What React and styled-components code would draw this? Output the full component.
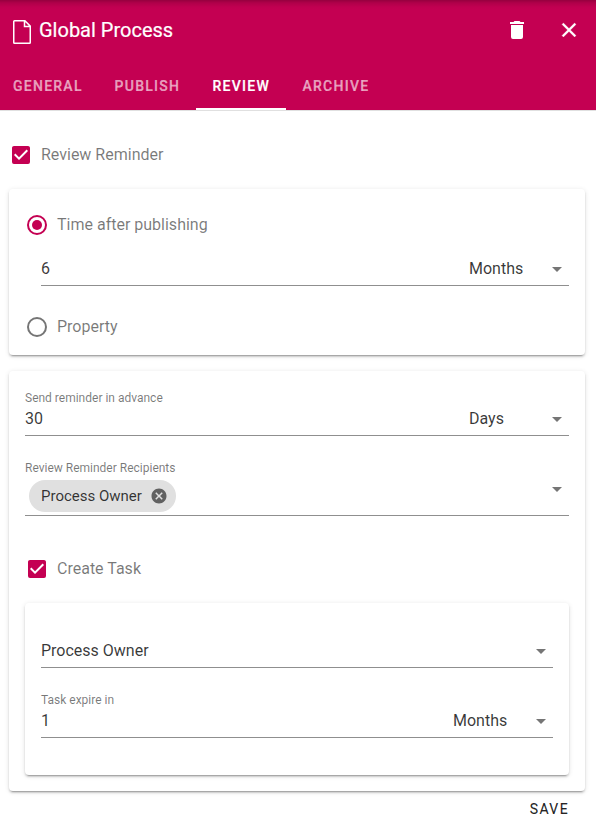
import React from "react";
import styled, { createGlobalStyle } from "styled-components";

const PINK = "#c40052";
const TEXT = "rgba(0, 0, 0, 0.78)";
const MUTED = "rgba(0, 0, 0, 0.53)";

const GlobalStyle = createGlobalStyle`
  *, *::before, *::after { box-sizing: border-box; }
  body { margin: 0; background: #fff; font-family: Roboto, "Liberation Sans", sans-serif; font-size: 16px; color: ${TEXT}; }
`;

const Dialog = styled.div`
  height: 830px;
  overflow: hidden;
  display: flex;
  flex-direction: column;
`;

const Header = styled.header`
  height: 111px;
  flex: none;
  display: flex;
  flex-direction: column;
  background: linear-gradient(rgba(0, 0, 0, 0.24), rgba(0, 0, 0, 0.1) 3px, rgba(0, 0, 0, 0.02) 7px, transparent 10px), ${PINK};
  border-bottom: 1px solid #e0e0e0;
  color: #fff;
`;

const TitleBar = styled.div`
  height: 62px;
  display: flex;
  align-items: center;
  padding: 0 15px 2px 13px;
`;

const Title = styled.h1`
  margin: 0 auto 0 8px;
  font-size: 20px;
  font-weight: 400;
  line-height: 24px;
  -webkit-text-stroke: 0.2px #fff;
`;

const IconButton = styled.button`
  width: 24px;
  height: 24px;
  padding: 0;
  margin-left: ${(p) => p.$gap || 0}px;
  border: 0;
  background: none;
  color: inherit;
  display: flex;
`;

const Icon = styled.svg`
  display: block;
  flex: none;
  width: ${(p) => p.$w || 24}px;
  height: ${(p) => p.$h || 24}px;
  fill: ${(p) => p.$color || "currentColor"};
  margin-top: ${(p) => p.$drop || 0}px;
`;

const Tabs = styled.nav`
  height: 48px;
  display: flex;
  padding-left: 13px;
`;

const Tab = styled.button`
  flex: none;
  width: ${(p) => p.$width}px;
  padding: 2px 0 0 ${(p) => p.$inset}px;
  border: 0;
  border-bottom: 2px solid ${(p) => (p.$active ? "#fff" : "transparent")};
  background: none;
  color: ${(p) => (p.$active ? "#fff" : "rgba(255, 255, 255, 0.6)")};
  font: 500 14px/44px Roboto, sans-serif;
  letter-spacing: 1.25px;
  text-align: left;
  text-transform: uppercase;
  -webkit-text-stroke: 0.2px currentColor;
`;

const Content = styled.main`
  display: flex;
  flex-direction: column;
  padding: 32px 11px 0 9px;
`;

const Choice = styled.label`
  display: flex;
  align-items: center;
  height: 24px;
  gap: 8px;
  line-height: 24px;
  color: ${MUTED};
  margin: ${(p) => p.$margin || 0};
`;

const ChoiceText = styled.span`
  height: 24px;
  line-height: 23px;
`;

const Card = styled.section`
  height: ${(p) => p.$height}px;
  margin-top: ${(p) => p.$top}px;
  padding: ${(p) => p.$pad};
  border-radius: 4px;
  background: #fff;
  box-shadow: 0 3px 1px -2px rgba(0, 0, 0, 0.2), 0 2px 2px 0 rgba(0, 0, 0, 0.14), 0 1px 5px 0 rgba(0, 0, 0, 0.12);
`;

const Field = styled.div`
  height: ${(p) => p.$height}px;
  margin: ${(p) => p.$margin || 0};
  border-bottom: 1px solid #8f8f8f;
  display: flex;
  flex-direction: column;
`;

const FieldLabel = styled.div`
  height: 16px;
  font-size: 12px;
  line-height: 16px;
  color: ${MUTED};
`;

const FieldRow = styled.div`
  flex: 1;
  display: flex;
  align-items: flex-start;
  line-height: 26px;
`;

const Value = styled.span`
  flex: 1;
`;

const Unit = styled.span`
  width: 76px;
`;

const Chip = styled.span`
  display: flex;
  align-items: center;
  height: 32px;
  width: 147px;
  margin: 4px auto 0 4px;
  padding: 0 8px 0 12px;
  justify-content: space-between;
  border-radius: 16px;
  background: #e0e0e0;
  font-size: 15px;
  line-height: 24px;
`;

const SaveButton = styled.button`
  align-self: flex-end;
  margin: 6px 16px 0 0;
  padding: 0;
  border: 0;
  background: none;
  color: rgba(0, 0, 0, 0.87);
  font: 400 14px/24px Roboto, sans-serif;
  letter-spacing: 1.4px;
  -webkit-text-stroke: 0.15px currentColor;
`;

const GREY = "rgba(0, 0, 0, 0.54)";

const FileIcon = () => (
  <Icon viewBox="0 0 18 24" $w={18} $drop={4}>
    <path
      d="M1.5 0.75H11.9L17.25 6.1V22.5Q17.25 23.25 16.5 23.25H1.5Q0.75 23.25 0.75 22.5V1.5Q0.75 0.75 1.5 0.75ZM11.5 0.75V6.6H17.25"
      fill="none"
      stroke="currentColor"
      strokeWidth="1.5"
    />
  </Icon>
);

const TrashIcon = () => (
  <Icon viewBox="0 0 24 24">
    <path d="M19,4H15.5L14.5,3H9.5L8.5,4H5V6H19M6,19A2,2 0 0,0 8,21H16A2,2 0 0,0 18,19V7H6V19Z" />
  </Icon>
);

const CloseIcon = () => (
  <Icon viewBox="0 0 24 24">
    <path d="M19,6.41L17.59,5L12,10.59L6.41,5L5,6.41L10.59,12L5,17.59L6.41,19L12,13.41L17.59,19L19,17.59L13.41,12L19,6.41Z" stroke="currentColor" strokeWidth="0.3" />
  </Icon>
);

const CheckedIcon = () => (
  <Icon viewBox="0 0 24 24" $color={PINK}>
    <path d="M10,17L5,12L6.41,10.58L10,14.17L17.59,6.58L19,8M19,3H5C3.89,3 3,3.89 3,5V19A2,2 0 0,0 5,21H19A2,2 0 0,0 21,19V5C21,3.89 20.1,3 19,3Z" />
  </Icon>
);

const RadioIcon = ({ checked }) => (
  <Icon viewBox="0 0 24 24" $color={checked ? PINK : "rgba(0, 0, 0, 0.54)"}>
    <path d="M12,20A8,8 0 0,1 4,12A8,8 0 0,1 12,4A8,8 0 0,1 20,12A8,8 0 0,1 12,20M12,2A10,10 0 0,0 2,12A10,10 0 0,0 12,22A10,10 0 0,0 22,12A10,10 0 0,0 12,2Z" />
    {checked && <circle cx="12" cy="12" r="5" />}
  </Icon>
);

const Caret = ({ drop = 0 }) => (
  <Icon viewBox="0 0 24 24" $color={GREY} $drop={drop}>
    <path d="M7,10L12,15L17,10H7Z" />
  </Icon>
);

const ChipClose = () => (
  <Icon viewBox="0 0 24 24" $w={18} $h={18} $color="#616161">
    <path d="M12,2C17.53,2 22,6.47 22,12C22,17.53 17.53,22 12,22C6.47,22 2,17.53 2,12C2,6.47 6.47,2 12,2M15.59,7L12,10.59L8.41,7L7,8.41L10.59,12L7,15.59L8.41,17L12,13.41L15.59,17L17,15.59L13.41,12L17,8.41L15.59,7Z" />
  </Icon>
);

const SelectField = ({ label, value, unit, height, margin }) => (
  <Field $height={height} $margin={margin}>
    {label && <FieldLabel>{label}</FieldLabel>}
    <FieldRow>
      <Value>{value}</Value>
      {unit && <Unit>{unit}</Unit>}
      <Caret drop={1} />
    </FieldRow>
  </Field>
);

export default function App() {
  return (
    <Dialog>
      <GlobalStyle />
      <Header>
        <TitleBar>
          <FileIcon />
          <Title>Global Process</Title>
          <IconButton aria-label="Delete"><TrashIcon /></IconButton>
          <IconButton aria-label="Close" $gap={28}><CloseIcon /></IconButton>
        </TitleBar>
        <Tabs>
          <Tab $width={86} $inset={0}>General</Tab>
          <Tab $width={97} $inset={15.6}>Publish</Tab>
          <Tab $width={90} $inset={16.5} $active>Review</Tab>
          <Tab $width={102} $inset={16.5}>Archive</Tab>
        </Tabs>
      </Header>
      <Content>
        <Choice><CheckedIcon /><ChoiceText>Review Reminder</ChoiceText></Choice>
        <Card $height={166} $top={22} $pad="24px 16px 0">
          <Choice><RadioIcon checked /><ChoiceText>Time after publishing</ChoiceText></Choice>
          <SelectField value="6" unit="Months" height={30} margin="19px 0 29px 16px" />
          <Choice><RadioIcon /><ChoiceText>Property</ChoiceText></Choice>
        </Card>
        <Card $height={420} $top={16} $pad="19px 16px 0">
          <SelectField label="Send reminder in advance" value="30" unit="Days" height={46} />
          <Field $height={56} $margin="24px 0 0">
            <FieldLabel>Review Reminder Recipients</FieldLabel>
            <FieldRow>
              <Chip>Process Owner<ChipClose /></Chip>
              <Caret drop={1} />
            </FieldRow>
          </Field>
          <Choice $margin="41px 0 0"><CheckedIcon /><ChoiceText>Create Task</ChoiceText></Choice>
          <Card $height={172} $top={22} $pad="35px 16px 0">
            <SelectField value="Process Owner" height={30} />
            <SelectField label="Task expire in" value="1" unit="Months" height={46} margin="24px 0 0" />
          </Card>
        </Card>
        <SaveButton>SAVE</SaveButton>
      </Content>
    </Dialog>
  );
}
